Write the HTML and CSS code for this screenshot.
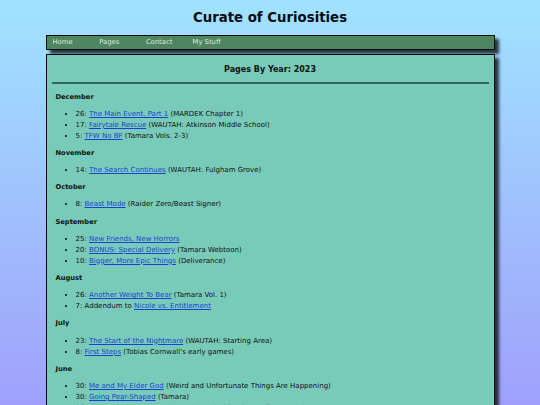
FILE: index.html
```html
<!DOCTYPE html>
<html>
<head>
<meta charset="utf-8">
<title>Pages By Year: 2023 - Curate of Curiosities</title>
<link rel="stylesheet" href="styles.css">
</head>
<body>
<header class="site-header">
  <h1 class="site-title">Curate of Curiosities</h1>
</header>
<div class="wrap">
  <nav class="nav">
    <a class="nav-link" href="#">Home</a>
    <a class="nav-link" href="#">Pages</a>
    <a class="nav-link" href="#">Contact</a>
    <a class="nav-link" href="#">My Stuff</a>
  </nav>
  <main class="main">
    <h2 class="page-title">Pages By Year: 2023</h2>
    <hr class="rule">
    <div class="entries">
      <h4 class="month">December</h4>
      <ul class="list">
        <li>26: <a href="#">The Main Event, Part 1</a> (MARDEK Chapter 1)</li>
        <li>17: <a href="#">Fairytale Rescue</a> (WAUTAH: Atkinson Middle School)</li>
        <li>5: <a href="#">TFW No BF</a> (Tamara Vols. 2-3)</li>
      </ul>
      <h4 class="month">November</h4>
      <ul class="list">
        <li>14: <a href="#">The Search Continues</a> (WAUTAH: Fulgham Grove)</li>
      </ul>
      <h4 class="month">October</h4>
      <ul class="list">
        <li>8: <a href="#">Beast Mode</a> (Raider Zero/Beast Signer)</li>
      </ul>
      <h4 class="month">September</h4>
      <ul class="list">
        <li>25: <a href="#">New Friends, New Horrors</a></li>
        <li>20: <a href="#">BONUS: Special Delivery</a> (Tamara Webtoon)</li>
        <li>10: <a href="#">Bigger, More Epic Things</a> (Deliverance)</li>
      </ul>
      <h4 class="month">August</h4>
      <ul class="list">
        <li>26: <a href="#">Another Weight To Bear</a> (Tamara Vol. 1)</li>
        <li>7: Addendum to <a href="#">Nicole vs. Entitlement</a></li>
      </ul>
      <h4 class="month">July</h4>
      <ul class="list">
        <li>23: <a href="#">The Start of the Nightmare</a> (WAUTAH: Starting Area)</li>
        <li>8: <a href="#">First Steps</a> (Tobias Cornwall's early games)</li>
      </ul>
      <h4 class="month">June</h4>
      <ul class="list">
        <li>30: <a href="#">Me and My Elder God</a> (Weird and Unfortunate Things Are Happening)</li>
        <li>30: <a href="#">Going Pear-Shaped</a> (Tamara)</li>
        <li>26: <a href="#">The Evolution of a Flash Developer</a> (Tobias Cornwall's games)</li>
      </ul>
    </div>
  </main>
</div>
</body>
</html>
```

FILE: styles.css
```css
html {
  min-height: 100%;
  background: linear-gradient(to bottom, #a0e2ff 0%, #a0a0fb 100%);
}
body {
  margin: 0;
  min-height: 405px;
  font-family: "DejaVu Sans", Verdana, sans-serif;
  color: #111;
  background: linear-gradient(to bottom, #a0e3ff 0%, #a0a0fb 405px);
}
.site-header {
  padding-top: 10px;
  height: 25px;
}
.site-title {
  margin: 0;
  text-align: center;
  font-size: 13.3px;
  line-height: 16px;
  font-weight: bold;
  color: #0b0b14;
}
.wrap {
  width: 449px;
  margin: 0 auto;
}
.nav {
  display: flex;
  height: 12.5px;
  background: #4f8560;
  border: 1.5px solid #0a0a0a;
  box-shadow: 4px 4px 3px rgba(0, 0, 0, 0.75);
  padding-left: 6px;
  align-items: center;
}
.nav-link {
  width: 46.7px;
  font-size: 6.8px;
  color: #dfe8e0;
  text-decoration: none;
}
.main {
  margin-top: 4.5px;
  background: #78cbb8;
  border: 1.5px solid #0a0a0a;
  box-shadow: 4px 4px 3px rgba(0, 0, 0, 0.75);
  padding: 9px 5px 20px;
}
.page-title {
  margin: 0 0 6px;
  text-align: center;
  font-size: 8px;
  line-height: 12px;
  font-weight: bold;
}
.rule {
  margin: 0 0 8px;
  border: 0;
  height: 1.5px;
  background: #2c6a5c;
}
.entries {
  padding: 0 4px;
}
.month {
  margin: 6.2px 0;
  font-size: 6.7px;
  line-height: 11px;
  font-weight: bold;
}
.list {
  margin: 6.2px 0;
  padding-left: 20px;
  font-size: 7px;
  line-height: 11px;
}
.list a {
  color: #1c3fd6;
}
```
